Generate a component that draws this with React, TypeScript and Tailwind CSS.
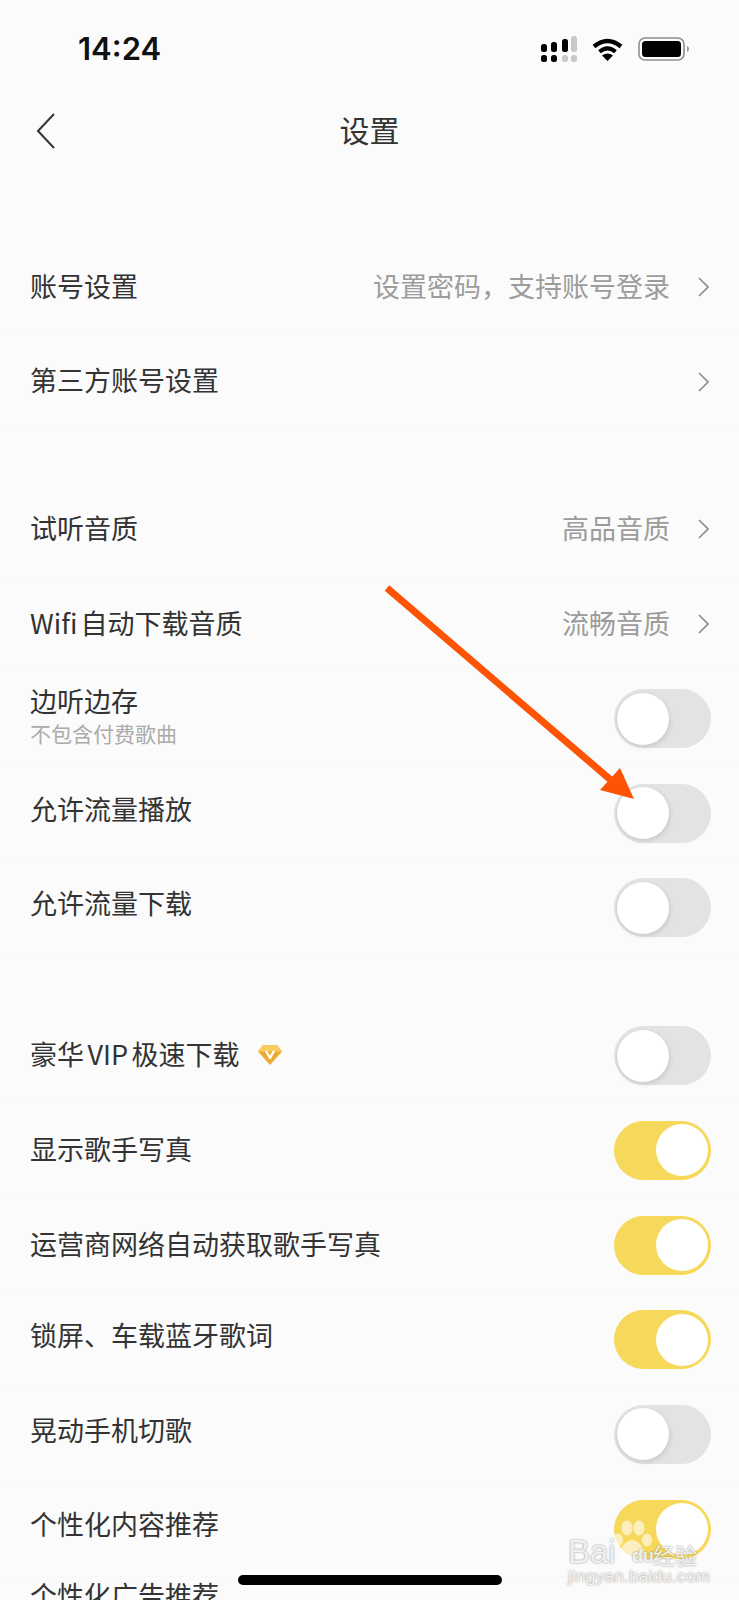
import type { ReactNode } from "react";

type Row = {
  label: ReactNode;
  sub?: string;
  value?: string;
  on?: boolean;
  link?: boolean;
  textClass?: string;
};

const groups: Row[][] = [
  [
    { label: "账号设置", value: "设置密码，支持账号登录", link: true },
    { label: "第三方账号设置", link: true, textClass: "mb-[4px]" },
  ],
  [
    { label: "试听音质", value: "高品音质", link: true },
    { label: <span className="[word-spacing:-3px]">Wifi 自动下载音质</span>, value: "流畅音质", link: true },
    { label: "边听边存", sub: "不包含付费歌曲", on: false, textClass: "mb-[4px]" },
    { label: "允许流量播放", on: false, textClass: "mb-[9px]" },
    { label: "允许流量下载", on: false, textClass: "mb-[9px]" },
  ],
  [
    { label: <VipLabel />, on: false, textClass: "mb-[3px]" },
    { label: "显示歌手写真", on: true },
    { label: "运营商网络自动获取歌手写真", on: true },
    { label: "锁屏、车载蓝牙歌词", on: true, textClass: "mb-[10px]" },
    { label: "晃动手机切歌", on: false, textClass: "mb-[9px]" },
    { label: "个性化内容推荐", on: true, textClass: "mb-[10px]" },
  ],
];

function VipLabel() {
  return (
    <span className="flex items-center [word-spacing:-2.5px]">
      豪华 VIP 极速下载
      <svg className="ml-[18px] mt-[2px] w-[24px] h-[20px]" viewBox="0 0 24 20">
        <path d="M5 0h14l5 6.5L12 20 0 6.5z" fill="#eba92f" />
        <path d="M5 0h14l5 6.5H0z" fill="#f7cd62" />
        <path
          d="M8 6l4 7 4-7"
          fill="none"
          stroke="#fff"
          strokeWidth={2.4}
          strokeLinejoin="round"
        />
      </svg>
    </span>
  );
}

function Toggle({ on }: { on?: boolean }) {
  return (
    <div
      className={`flex items-center w-[97px] h-[59px] rounded-full ${
        on
          ? "justify-end pr-[3px] bg-[#f6d95a]"
          : "justify-start pl-[3px] bg-[#e3e3e3]"
      }`}
    >
      <div
        className={`w-[52px] h-[52px] rounded-full bg-white ${
          on ? "" : "shadow-[1px_2px_5px_rgba(0,0,0,0.12),-1px_0_0_#d9d9d9]"
        }`}
      />
    </div>
  );
}

function Chevron() {
  return (
    <svg className="ml-[28px] mr-[2px] w-[11px] h-[20px]" viewBox="0 0 11 20" fill="none">
      <path d="M1 1l9 9-9 9" stroke="#8c8c8c" strokeWidth={1.6} />
    </svg>
  );
}

function SettingRow({ row }: { row: Row }) {
  return (
    <div className="flex items-center justify-between h-[94.7px] pl-[30px] pr-[28px] border-b border-[#f8f8f8]">
      <div className={row.textClass ?? "mb-[2px]"}>
        <div className={row.sub ? "text-[27px] leading-[34px] -mt-[1px]" : "text-[27px] leading-[36px]"}>
          {row.label}
        </div>
        {row.sub && (
          <div className="text-[21px] leading-[30px] text-[#ababab]">{row.sub}</div>
        )}
      </div>
      {row.link ? (
        <div className="flex items-center">
          {row.value && <span className="text-[27px] text-[#9c9c9c] mb-[2px]">{row.value}</span>}
          <Chevron />
        </div>
      ) : (
        <Toggle on={row.on} />
      )}
    </div>
  );
}

function StatusIcons() {
  return (
    <div className="flex items-center">
      <svg className="w-[36px] h-[26px]" viewBox="0 0 36 26">
        <rect x="0" y="8" width="6" height="8" rx="2.5" fill="#000" />
        <rect x="10" y="6" width="6" height="10" rx="2.5" fill="#000" />
        <rect x="21" y="3" width="6" height="13" rx="2.5" fill="#000" />
        <rect x="30" y="0" width="6" height="16" rx="2.5" fill="#c9c9c9" />
        <rect x="0" y="19" width="6" height="7" rx="2.5" fill="#000" />
        <rect x="10" y="19" width="6" height="7" rx="2.5" fill="#000" />
        <rect x="21" y="19" width="6" height="7" rx="2.5" fill="#c9c9c9" />
        <rect x="30" y="19" width="6" height="7" rx="2.5" fill="#c9c9c9" />
      </svg>
      <svg className="ml-[15px] w-[31px] h-[23px]" viewBox="0 0 31 23" fill="none">
        <path d="M2 8.5Q15.5-2.5 29 8.5" stroke="#000" strokeWidth={4.5} />
        <path d="M7.5 13.8Q15.5 7 23.5 13.8" stroke="#000" strokeWidth={4} />
        <path d="M15.5 23L10 17.5Q15.5 13.5 21 17.5Z" fill="#000" />
      </svg>
      <svg className="ml-[15px] w-[51px] h-[24px]" viewBox="0 0 51 24" fill="none">
        <rect x="1" y="1" width="45" height="22" rx="6" stroke="#8e8e8e" strokeWidth={1.6} />
        <rect x="4" y="4" width="39" height="16" rx="3.5" fill="#000" />
        <path d="M49 9c1.5.5 2 1.5 2 3s-.5 2.500-2 3z" fill="#9a9a9a" />
      </svg>
    </div>
  );
}

function Watermark() {
  return (
    <div className="absolute left-[566px] top-[1532px] w-[140px] h-[54px] text-white/85 [text-shadow:0_0_2px_rgba(90,90,90,0.75)] pointer-events-none">
      <svg className="absolute left-[46px] -top-[12px] w-[40px] h-[43px]" viewBox="0 0 40 43" fill="#fff" fillOpacity={0.6}>
        <ellipse cx="6" cy="20" rx="5" ry="6.500" />
        <ellipse cx="15" cy="8" rx="5.500" ry="7.500" />
        <ellipse cx="27" cy="8" rx="5.500" ry="7.500" />
        <ellipse cx="35" cy="20" rx="5" ry="6.500" />
        <path d="M20 20c7 0 15 11 13 18-2 6-9 4-13 4s-11 2-13-4c-2-7 6-18 13-18z" />
      </svg>
      <span className="absolute left-[2px] top-[3px] text-[33px] leading-[34px] font-['Liberation_Sans']">
        Bai
      </span>
      <span className="absolute left-[66px] top-[14px] text-[18px] leading-[20px] font-bold font-['Liberation_Sans']">
        du
      </span>
      <span className="absolute left-[87px] top-[8px] text-[22px] leading-[28px]">经验</span>
      <span className="absolute left-[2px] top-[35px] text-[17px] leading-[20px] font-['Liberation_Sans'] tracking-[0.3px] whitespace-nowrap">
        jingyan.baidu.com
      </span>
    </div>
  );
}

export default function App() {
  return (
    <div className="relative w-[739px] h-[1600px] overflow-hidden bg-[#fbfbfb] text-[#333] font-['Noto_Sans_CJK_SC','Liberation_Sans',sans-serif]">
      <div className="flex items-center justify-between h-[98px] pl-[78px] pr-[50px]">
        <span className="text-[31px] font-semibold text-[#111] font-['Inter',sans-serif]">14:24</span>
        <StatusIcons />
      </div>

      <div className="relative flex items-center justify-center h-[66px]">
        <svg className="absolute left-[36px] top-[15px] w-[19px] h-[36px]" viewBox="0 0 19 36" fill="none">
          <path d="M18 1L2 18l16 17" stroke="#333" strokeWidth={2} />
        </svg>
        <span className="text-[30px] mb-[4px]">设置</span>
      </div>

      <div className="mt-[76px] flex flex-col gap-[53px]">
        {groups.map((rows, i) => (
          <div key={i}>
            {rows.map((row, j) => (
              <SettingRow key={j} row={row} />
            ))}
          </div>
        ))}
      </div>
      <div className="pl-[30px] text-[27px] leading-[36px]">个性化广告推荐</div>

      <svg className="absolute left-0 top-0 w-[739px] h-[1600px] pointer-events-none" viewBox="0 0 739 1600" fill="none">
        <path d="M387 588L612 781" stroke="#fc5404" strokeWidth={7} />
        <path d="M634 799L620 768 600 790z" fill="#fc5404" />
      </svg>

      <Watermark />

      <div className="absolute left-[238px] top-[1575px] w-[264px] h-[10px] rounded-full bg-black" />
    </div>
  );
}
